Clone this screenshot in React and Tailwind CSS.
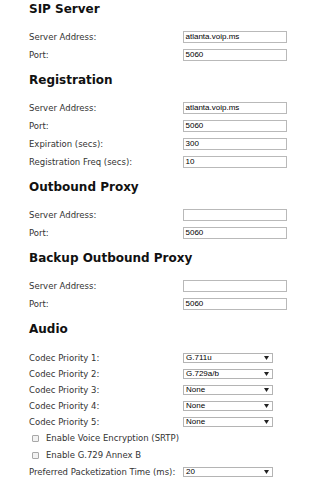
import React from "react";

const labelCls =
  "text-[8.5px] leading-[12px] text-[#333] whitespace-nowrap [font-family:'DejaVu_Sans',Verdana,sans-serif]";

function Heading({ children, mb = "mb-[15px]" }) {
  return (
    <h2
      className={
        "h-[14px] text-[12px] leading-[14px] font-bold text-[#111] whitespace-nowrap [font-family:'DejaVu_Sans',Verdana,sans-serif] " +
        mb
      }
    >
      {children}
    </h2>
  );
}

function TextRow({ label, value }) {
  return (
    <div className="grid grid-cols-[154px_auto] items-center h-[12px]">
      <span className={labelCls}>{label}</span>
      <div className="h-[12px] w-[104px] border border-[#b9b9b9] bg-white px-[1.5px] flex items-center text-[8px] leading-none text-black [font-family:'Liberation_Sans',Arial,sans-serif]">
        {value}
      </div>
    </div>
  );
}

function SelectRow({ label, value }) {
  return (
    <div className="grid grid-cols-[154px_auto] items-center h-[12px]">
      <span className={labelCls}>{label}</span>
      <div className="h-[10px] w-[90px] border border-[#b4b4b4] bg-white pl-[2px] pr-[3px] flex items-center justify-between text-[8px] leading-none text-black [font-family:'Liberation_Sans',Arial,sans-serif]">
        <span>{value}</span>
        <svg width="5" height="4" viewBox="0 0 5 4">
          <path d="M0 0 L5 0 L2.5 4 Z" fill="#222" />
        </svg>
      </div>
    </div>
  );
}

function CheckRow({ label }) {
  return (
    <div className="flex items-center h-[12px] pl-[3px]">
      <span className="w-[7px] h-[7px] border border-[#a8a8a8] bg-[#f2f2f2] rounded-[1px] mr-[7px]" />
      <span className={labelCls}>{label}</span>
    </div>
  );
}

export default function App() {
  return (
    <div className="w-[320px] h-[486px] bg-white overflow-hidden pl-[29px] pt-[2px]">
      <section className="mb-[12px]">
        <Heading>SIP Server</Heading>
        <div className="flex flex-col gap-[6px]">
          <TextRow label="Server Address:" value="atlanta.voip.ms" />
          <TextRow label="Port:" value="5060" />
        </div>
      </section>

      <section className="mb-[12px]">
        <Heading>Registration</Heading>
        <div className="flex flex-col gap-[6px]">
          <TextRow label="Server Address:" value="atlanta.voip.ms" />
          <TextRow label="Port:" value="5060" />
          <TextRow label="Expiration (secs):" value="300" />
          <TextRow label="Registration Freq (secs):" value="10" />
        </div>
      </section>

      <section className="mb-[12px]">
        <Heading>Outbound Proxy</Heading>
        <div className="flex flex-col gap-[6px]">
          <TextRow label="Server Address:" value="" />
          <TextRow label="Port:" value="5060" />
        </div>
      </section>

      <section className="mb-[12px]">
        <Heading>Backup Outbound Proxy</Heading>
        <div className="flex flex-col gap-[6px]">
          <TextRow label="Server Address:" value="" />
          <TextRow label="Port:" value="5060" />
        </div>
      </section>

      <section>
        <Heading mb="mb-[16px]">Audio</Heading>
        <div className="flex flex-col gap-[4px]">
          <SelectRow label="Codec Priority 1:" value="G.711u" />
          <SelectRow label="Codec Priority 2:" value="G.729a/b" />
          <SelectRow label="Codec Priority 3:" value="None" />
          <SelectRow label="Codec Priority 4:" value="None" />
          <SelectRow label="Codec Priority 5:" value="None" />
          <CheckRow label="Enable Voice Encryption (SRTP)" />
          <div className="mt-[1px]">
            <CheckRow label="Enable G.729 Annex B" />
          </div>
          <div className="mt-[1px]">
            <SelectRow label="Preferred Packetization Time (ms):" value="20" />
          </div>
        </div>
      </section>
    </div>
  );
}
